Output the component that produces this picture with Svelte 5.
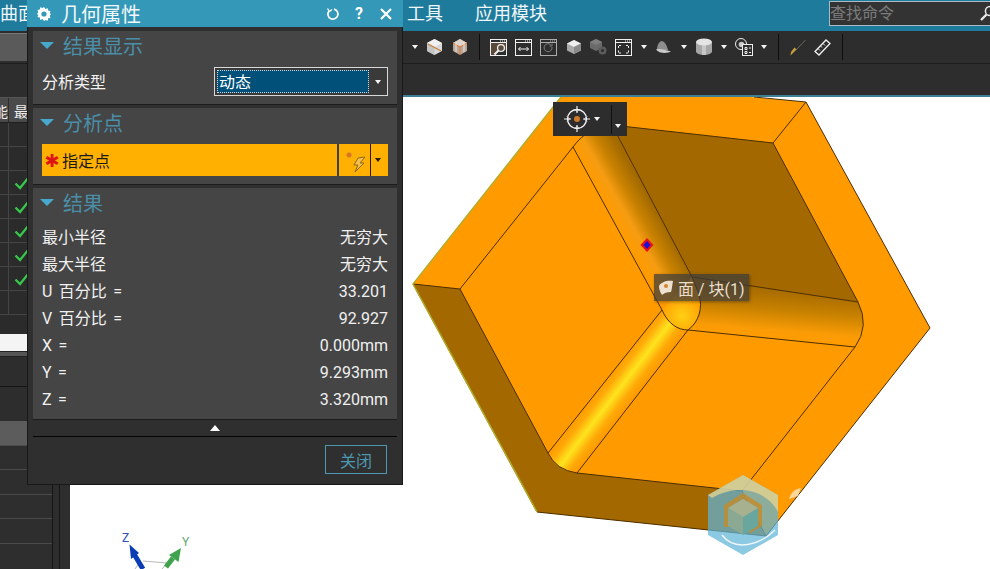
<script>
	const results = [
		['最小半径', '无穷大'],
		['最大半径', '无穷大'],
		['U 百分比 =', '33.201'],
		['V 百分比 =', '92.927'],
		['X =', '0.000mm'],
		['Y =', '9.293mm'],
		['Z =', '3.320mm']
	];
	const rows = [false, false, true, true, true, true, true, false];
	const lowerRows = [0, 1, 2, 3, 4];
</script>

{#snippet arrow()}
	<span class="tool-arrow"><i class="tri"></i></span>
{/snippet}

{#snippet sep()}
	<span class="tool-sep"></span>
{/snippet}

{#snippet winIcon(body)}
	<span class="tool">
		<svg width="17" height="17" viewBox="0 0 17 17" fill="none" stroke="#f0f0f0">
			<rect x="0.5" y="0.5" width="16" height="16" />
			<path d="M1 3.5h15" stroke-width="1" />
			<path d="M10 2h1M12 2h1M14 2h1" stroke-width="1" />
			{@render body()}
		</svg>
	</span>
{/snippet}

{#snippet sectionHead(title)}
	<div class="sec-head">
		<i class="sec-tri"></i>
		<span>{title}</span>
	</div>
{/snippet}

<div class="app">
	<header class="menubar">
		<span class="menu-clip">曲面</span>
		<span class="menu-tools">工具</span>
		<span class="menu-app">应用模块</span>
		<div class="search">
			<span>查找命令</span>
			<svg class="search-icon" width="14" height="20" viewBox="0 0 14 20" fill="none" stroke="#e8e8e8" stroke-width="1.5">
				<circle cx="10" cy="7" r="4.6" />
				<path d="M6.5 10.5L1 16" stroke-width="2.4" />
			</svg>
		</div>
	</header>

	<div class="toolbar">
		<div class="left-btn"></div>
		<div class="tools">
			{@render arrow()}
			<span class="tool">
				<svg width="17" height="18" viewBox="0 0 17 18">
					<path d="M8.5 1L16 5v8l-7.5 4L1 13V5z" fill="#d9d9d9" />
					<path d="M8.5 1L16 5l-7.5 4L1 5z" fill="#f0f0f0" />
					<path d="M1 5l7.5 4v8L1 13z" fill="#c4c4c4" />
					<path d="M2 6l13 7" stroke="#c9803a" stroke-width="1.4" />
				</svg>
			</span>
			<span class="tool">
				<svg width="16" height="18" viewBox="0 0 16 18">
					<path d="M8 1l7 4v8l-7 4-7-4V5z" fill="#b9a79a" />
					<path d="M8 1l7 4-7 4-7-4z" fill="#e0d4cc" />
					<path d="M8 9v8M1 5l7 4 7-4" stroke="#d9722e" stroke-width="1" fill="none" />
					<path d="M4 4v10M12 4v10" stroke="#f0e8e0" stroke-width="1" />
				</svg>
			</span>
			{@render sep()}
			{#snippet zoomBody()}
				<path d="M1 4h15v7H9l-3 5H1z" fill="#5a4a3a" stroke="none" />
				<circle cx="11" cy="9" r="3.4" stroke-width="1.3" />
				<path d="M8.5 11.5L4.5 15.5" stroke-width="2" />
			{/snippet}
			{@render winIcon(zoomBody)}
			{#snippet fitBody()}
				<path d="M3.5 10h10M5.5 8l-2 2 2 2M11.5 8l2 2-2 2" />
			{/snippet}
			{@render winIcon(fitBody)}
			{#snippet rotateBody()}
				<path d="M12 8a4 4 0 1 1-1.4-2.4M12 4.5v2.5h-2.5" stroke="#a8a8a8" />
			{/snippet}
			<span class="dim">{@render winIcon(rotateBody)}</span>
			<span class="tool">
				<svg width="16" height="16" viewBox="0 0 16 16">
					<path d="M8 1l7 3.5v7L8 15l-7-3.5v-7z" fill="#a9a9a9" />
					<path d="M8 1l7 3.5L8 8 1 4.5z" fill="#efefef" />
					<path d="M8 8l7-3.5v7L8 15z" fill="#8a8a8a" />
				</svg>
			</span>
			<span class="tool">
				<svg width="18" height="18" viewBox="0 0 18 18">
					<path d="M6 1l6 3v6l-6 3-6-3V4z" fill="#6a6a6a" />
					<path d="M6 1l6 3-6 3-6-3z" fill="#7e7e7e" />
					<circle cx="12.5" cy="12.5" r="4" fill="#5c5c5c" />
					<circle cx="12.5" cy="12.5" r="1.5" fill="#2d2d2d" />
				</svg>
			</span>
			{#snippet fullBody()}
				<path d="M3.5 9V6.5H6M13.5 9V6.5H11M3.5 11.5V14H6M13.5 11.5V14H11" stroke-dasharray="2 1" />
			{/snippet}
			{@render winIcon(fullBody)}
			{@render arrow()}
			<span class="tool">
				<svg width="16" height="14" viewBox="0 0 16 14">
					<path d="M5 1c4 0 6 5 7 9H1c0-4 1-7 4-9z" fill="#8e8e8e" />
					<path d="M0 9.500c3-1 9 0 15 2-3 2-12 2.500-15-2z" fill="#c8c8c8" />
				</svg>
			</span>
			{@render arrow()}
			<span class="tool">
				<svg width="16" height="18" viewBox="0 0 16 18">
					<path d="M0 4v10c2 4 14 4 16 0V4z" fill="#a6a6a6" />
					<path d="M6 4v13h4V4z" fill="#c6c6c6" />
					<ellipse cx="8" cy="4" rx="8" ry="3.500" fill="#e4e4e4" />
				</svg>
			</span>
			{@render arrow()}
			<span class="tool">
				<svg width="18" height="18" viewBox="0 0 18 18" fill="none" stroke="#eee">
					<circle cx="6" cy="6" r="5.500" />
					<circle cx="6.500" cy="6.500" r="2.800" fill="#c8c8c8" stroke="none" />
					<rect x="7.500" y="6.500" width="10" height="11" fill="#2d2d2d" />
					<path d="M10 9.500h2v2h-2zM14 10h2M10 13.500h2v2h-2zM14 14.500h2" stroke-width="1" />
				</svg>
			</span>
			{@render arrow()}
			{@render sep()}
			<span class="tool">
				<svg width="16" height="17" viewBox="0 0 16 17">
					<path d="M15.500 1L6 11" stroke="#6a6a5a" stroke-width="1" />
					<path d="M6.500 10.500L2 15l-1.500 1.500L1 13l3.500-4.500z" fill="#c8a038" />
				</svg>
			</span>
			<span class="tool">
				<svg width="17" height="17" viewBox="0 0 17 17" fill="none" stroke="#f0f0f0" stroke-width="1.300">
					<path d="M1 12.500L12 1l4 3.500L5 16z" />
					<path d="M4 9.500l2 2M6.500 7l1.500 1.500M9 4.500l2 2" stroke-width="1" />
				</svg>
			</span>
			{@render sep()}
		</div>
	</div>

	<div class="subbar"></div>

	<div class="body">
		<aside class="left">
			<div class="tree">
				<div class="table-head"><span class="cell-a">能</span><span class="cell-b">最</span></div>
				{#each rows as checked}
					<div class="row">
						<span class="cell-a"></span>
						<span class="cell-b">
							{#if checked}
								<svg width="16" height="14" viewBox="0 0 16 14" fill="none" stroke="#35c94a" stroke-width="2.200">
									<path d="M1.500 7.500L6 12 14.500 1.500" />
								</svg>
							{/if}
						</span>
					</div>
				{/each}
				<div class="row short"></div>
				<div class="white-row"></div>
				<div class="band"></div>
				<div class="lower-dark"></div>
				<div class="lower-dark second"></div>
				<div class="selected"></div>
				{#each lowerRows as r}
					<div class="lower-row" data-row={r}></div>
				{/each}
			</div>
			<div class="gutter"></div>
			<div class="gutter wide"></div>
		</aside>

		<main class="viewport">
			<svg class="model" width="920" height="472" viewBox="70 97 920 472">
				<defs>
					<linearGradient id="f1" gradientUnits="userSpaceOnUse" x1="614" y1="219" x2="649" y2="199">
						<stop offset="0" stop-color="#ff9b00" />
						<stop offset="0.32" stop-color="#f59c12" />
						<stop offset="0.62" stop-color="#c98200" />
						<stop offset="1" stop-color="#a36a00" />
					</linearGradient>
					<linearGradient id="f2" gradientUnits="userSpaceOnUse" x1="772" y1="290" x2="768" y2="340">
						<stop offset="0" stop-color="#a86c00" />
						<stop offset="0.4" stop-color="#c98200" />
						<stop offset="0.8" stop-color="#fb9c06" />
						<stop offset="1" stop-color="#ff9b00" />
					</linearGradient>
					<linearGradient id="f3" gradientUnits="userSpaceOnUse" x1="604" y1="382" x2="630" y2="402">
						<stop offset="0" stop-color="#ff9b00" />
						<stop offset="0.2" stop-color="#ffaa08" />
						<stop offset="0.5" stop-color="#ffe41e" />
						<stop offset="0.8" stop-color="#ffaa08" />
						<stop offset="1" stop-color="#ff9b00" />
					</linearGradient>
					<radialGradient id="ball" gradientUnits="userSpaceOnUse" cx="682" cy="316" r="22">
						<stop offset="0" stop-color="#ffcf14" />
						<stop offset="1" stop-color="#ff9f02" />
					</radialGradient>
				</defs>

				<!-- body -->
				<polygon points="413,284 561,97 565,80 806,102 930,328 766,536 537,512" fill="#ff9b00" />

				<!-- walls and pocket faces -->
				<path d="M413,284 L460,289 L548,453 Q556,470 577,473 L742,491 L766,536 L537,512 Z" fill="#a36800" />
				<polygon points="612,125 773,143 858,302 692,277" fill="#a36800" />
				<path d="M573,147 Q580,137 592,130 L612,125 L692,277 L662,310 Z" fill="url(#f1)" />
				<path d="M692,277 L858,302 Q870,326 855,347 L688,330 Z" fill="url(#f2)" />
				<path d="M662,310 L548,453 Q556,470 577,473 L688,330 Z" fill="url(#f3)" />
				<path d="M662,310 C668,324 678,330 688,330 C699,322 703,308 699,294 L692,277 Z" fill="url(#ball)" />

				<!-- edges -->
				<g fill="none" stroke="#4a2e00" stroke-width="1">
					<path d="M413,284 L537,512 L766,536 L930,328 L806,102 L754,97" />
					<path d="M413,284 L460,289 L573,147 Q580,137 592,130" />
					<path d="M460,289 L548,453 Q556,470 577,473 L742,491 L766,536" />
					<path d="M742,491 L855,347 Q870,326 858,302 L773,143 L806,102" />
					<path d="M612,125 L773,143" />
					<path d="M573,147 L662,310 L548,453" />
					<path d="M612,125 L692,277 L858,302" />
					<path d="M577,473 L688,330 L855,347" />
					<path d="M662,310 C668,324 678,330 688,330 C699,322 703,308 699,294 L692,277" />
				</g>
				<path d="M537,512 L413,284 L561,97" fill="none" stroke="#b3ad2c" stroke-width="1.500" />

				<!-- selected point -->
				<polygon points="647,238 653.500,245 647,252 640.500,245" fill="#e8101c" />
				<polygon points="647,241 650.500,245 647,249 643.500,245" fill="#1a10d8" />

				<!-- watermark -->
				<g>
					<polygon points="743,475 778,495 778,535 743,555 708,535 708,495" fill="#5fb4d8" fill-opacity="0.72" />
					<path d="M708,495 L743,475 L778,495 L778,512 C768,492 740,482 712,498 Z" fill="#f0d890" fill-opacity="0.7" />
					<path d="M724,505 L743,493 L762,505 L762,526 L750,533 L738,527 L724,527 Z" fill="#c98a20" fill-opacity="0.75" />
					<polygon points="728,508 743,499 758,508 758,526 743,535 728,526" fill="#5fa9a8" fill-opacity="0.9" />
					<polygon points="728,508 743,499 758,508 743,517" fill="#a8b18f" />
					<polygon points="728,508 743,517 743,535 728,526" fill="#8aa892" />
					<path d="M722,535 C735,552 760,545 775,530" fill="none" stroke="#fff" stroke-opacity="0.85" stroke-width="1.500" />
					<path d="M789,499 C791,492 795,489 801,488 L798,496 Z" fill="#fff" fill-opacity="0.6" />
				</g>

				<!-- triad -->
				<g>
					<path d="M143,561 L167,563 M167,563 L162,569 M139,563 L135,569" stroke="#b8b8b8" stroke-width="1" fill="none" />
					<path d="M134,554 L143,569" stroke="#0a3cb4" stroke-width="5" />
					<polygon points="129.500,544.500 139,553 131,559" fill="#0a3cb4" />
					<path d="M173,558 L166,567" stroke="#3fa34d" stroke-width="5" />
					<polygon points="181,548 178.500,562 169,555" fill="#3fa34d" />
					<text x="122" y="542" class="axis z">Z</text>
					<text x="182" y="546" class="axis y">Y</text>
				</g>
			</svg>

			<div class="selbar">
				<svg width="26" height="26" viewBox="0 0 26 26" fill="none" stroke="#f2f2f2">
					<circle cx="13" cy="13" r="9.500" stroke-width="1.300" />
					<circle cx="13" cy="13" r="3" fill="#d07a2a" stroke="none" />
					<path d="M13 0v7M13 19v7M0 13h7M19 13h7" stroke-width="1.200" />
					<path d="M10.500 3L13 5.500 15.500 3M10.500 23L13 20.500 15.500 23M3 10.500L5.500 13 3 15.500M23 10.500L20.500 13 23 15.500" stroke-width="1" />
				</svg>
				<i class="tri"></i>
				<span class="selbar-sep"></span>
				<i class="tri low"></i>
			</div>

			<div class="tip">
				<svg width="16" height="16" viewBox="0 0 16 16">
					<path d="M1 6c2-4 8-6 14-5-1 5-1 8-2 11-4 0-7 1-9 3-2-3-3-6-3-9z" fill="#eee2cf" />
					<circle cx="8" cy="6" r="2" fill="#d9822e" />
				</svg>
				<span>面 / 块(1)</span>
			</div>
		</main>
	</div>

	<section class="dialog">
		<div class="title">
			<svg class="gear" width="14" height="14" viewBox="0 0 14 14">
				<path d="M7 0l1.500 2 2.300-.8.300 2.400 2.400.4-.8 2.300L14 7l-1.300 1.700.8 2.200-2.400.4-.3 2.400-2.300-.8L7 14l-1.500-1.900-2.300.8-.3-2.400-2.400-.4.800-2.200L0 7l1.300-1.700-.8-2.300 2.400-.4.300-2.400 2.300.8z" fill="#fff" />
				<circle cx="7" cy="7" r="2.600" fill="#3498b9" />
			</svg>
			<span class="title-text">几何属性</span>
			<svg class="refresh" width="14" height="14" viewBox="0 0 14 14" fill="none" stroke="#fff" stroke-width="1.700">
				<path d="M8 2.200A5 5 0 1 1 3 4" />
				<path d="M1.500 1.500L3.500 4.500 6 2.500" stroke-width="1.300" />
			</svg>
			<span class="help">?</span>
			<svg class="close" width="12" height="12" viewBox="0 0 12 12" stroke="#fff" stroke-width="2.200">
				<path d="M1 1l10 10M11 1L1 11" />
			</svg>
		</div>

		<div class="section first">
			{@render sectionHead('结果显示')}
			<div class="type-row">
				<span class="type-label">分析类型</span>
				<div class="combo">
					<div class="combo-value">动态</div>
					<i class="tri"></i>
				</div>
			</div>
		</div>

		<div class="section second">
			{@render sectionHead('分析点')}
			<div class="point">
				<span class="star">✱</span>
				<span class="point-label">指定点</span>
				<div class="point-tools">
					<svg width="30" height="30" viewBox="0 0 30 30">
						<circle cx="10" cy="10" r="2.500" fill="#e0701a" stroke="#c9a040" stroke-width="0.500" />
						<path d="M26 12l-7 1-4 7h4l-3 7 9-9h-4z" fill="#f7c04a" stroke="#8a6a20" stroke-width="1" />
					</svg>
					<span class="point-line"></span>
					<i class="tri dark"></i>
				</div>
			</div>
		</div>

		<div class="section third">
			{@render sectionHead('结果')}
			{#each results as [label, value]}
				<div class="result">
					<span class="result-label">{label}</span>
					<span>{value}</span>
				</div>
			{/each}
		</div>

		<div class="collapse"><i class="up"></i></div>
		<div class="footer">
			<button class="btn-close">关闭</button>
		</div>
	</section>
</div>

<style>
	:global(body) {
		margin: 0;
		overflow: hidden;
	}

	.app {
		position: relative;
		width: 990px;
		height: 569px;
		overflow: hidden;
		background: #2d2d2d;
		font-family: Roboto, "Noto Sans CJK SC", sans-serif;
		color: #eee;
	}

	.tri {
		display: block;
		width: 0;
		height: 0;
		border-left: 3.500px solid transparent;
		border-right: 3.500px solid transparent;
		border-top: 4px solid #f4f4f4;
	}

	.menubar {
		position: relative;
		height: 31px;
		background: #1f7b9c;
		font-size: 18px;
		line-height: 28px;
		color: #f0f6f8;
		display: flex;
	}

	.menu-clip {
		width: 407px;
		flex: none;
	}

	.menu-tools {
		width: 68px;
		flex: none;
	}

	.search {
		margin-left: auto;
		margin-top: 1px;
		width: 160px;
		height: 23px;
		box-sizing: content-box;
		background: #333;
		border: 1px solid #a9bcc4;
		border-right: none;
		font-size: 16px;
		line-height: 23px;
		color: #7c7c7c;
		display: flex;
		justify-content: space-between;
		align-items: center;
		overflow: hidden;
	}

	.search-icon {
		flex: none;
		margin-right: -4px;
	}

	.toolbar {
		height: 32px;
		border-bottom: 1px solid #1d1d1d;
		background: #2d2d2d;
		display: flex;
	}

	.left-btn {
		width: 27px;
		height: 27px;
		margin-top: 2px;
		background: #5a5a5a;
		border-top: 1px solid #777;
		box-sizing: content-box;
	}

	.tools {
		margin-left: 380px;
		display: flex;
		align-items: center;
		height: 32px;
	}

	.tool {
		width: 25px;
		display: flex;
		justify-content: center;
		align-items: center;
	}

	.dim {
		opacity: 0.65;
		display: flex;
	}

	.tool-arrow {
		width: 15px;
		display: flex;
		justify-content: center;
	}

	.tool-sep {
		width: 14px;
		height: 26px;
		position: relative;
		display: flex;
		justify-content: center;
	}

	.tool-sep::after {
		content: "";
		width: 1px;
		background: #0d0d0d;
	}

	.subbar {
		height: 31px;
		background: #2d2d2d;
	}

	.body {
		display: flex;
		height: 474px;
	}

	.left {
		width: 70px;
		flex: none;
		display: flex;
		padding-top: 2px;
		box-sizing: border-box;
		background: #2d2d2d;
	}

	.tree {
		width: 52px;
		display: flex;
		flex-direction: column;
	}

	.gutter {
		width: 6px;
		border-left: 1px solid #161616;
	}

	.gutter.wide {
		width: 10px;
	}

	.table-head {
		height: 26px;
		background: #4a4a4a;
		border-top: 1px solid #555;
		border-bottom: 1px solid #1f1f1f;
		box-sizing: border-box;
		display: flex;
		font-size: 14px;
		line-height: 28px;
		color: #eee;
	}

	.cell-a {
		width: 8px;
		flex: none;
		overflow: hidden;
		direction: rtl;
		border-right: 1px solid #2d2d2d;
	}

	.cell-b {
		padding-left: 5px;
		display: flex;
		align-items: center;
	}

	.table-head .cell-b {
		display: block;
	}

	.row {
		height: 24px;
		border-bottom: 1px solid #444;
		box-sizing: border-box;
		display: flex;
		background: #2b2b2b;
	}

	.row .cell-a {
		border-right-color: #444;
	}

	.row.short {
		height: 19px;
		border-bottom: none;
	}

	.white-row {
		height: 17px;
		background: #f4f4f4;
	}

	.band {
		height: 6px;
		background: #565656;
		border-top: 1px solid #222;
		border-bottom: 1px solid #222;
		box-sizing: border-box;
	}

	.lower-dark {
		height: 29px;
		background: #2d2d2d;
		border-bottom: 1px solid #141414;
	}

	.lower-dark.second {
		height: 34px;
		border-bottom: none;
	}

	.selected {
		height: 24px;
		background: #5c5c5c;
	}

	.lower-row {
		height: 23.400px;
		border-top: 1px solid #4a4a4a;
		background: #2e2e2e;
	}

	.viewport {
		position: relative;
		flex: 1;
		background: #fff;
		border-top: 2px solid #3d7f95;
		overflow: hidden;
	}

	.model {
		position: absolute;
		left: 0;
		top: 0;
		display: block;
	}

	.axis {
		font-size: 12px;
		font-family: Roboto, sans-serif;
	}

	.axis.z {
		fill: #2a52b8;
	}

	.axis.y {
		fill: #6aa872;
	}

	.selbar {
		position: absolute;
		left: 483px;
		top: 5px;
		width: 74px;
		height: 34px;
		background: #2d2d2d;
		box-sizing: border-box;
		padding-left: 11px;
		display: flex;
		align-items: center;
	}

	.selbar .tri {
		margin-left: 4px;
	}

	.selbar-sep {
		width: 1px;
		height: 29px;
		background: #111;
		margin-left: 11px;
	}

	.selbar .tri.low {
		margin-left: 3px;
		margin-top: 14px;
	}

	.tip {
		position: absolute;
		left: 584px;
		top: 177px;
		width: 95px;
		height: 27px;
		box-sizing: border-box;
		background: rgba(60, 60, 60, 0.72);
		box-shadow: 1px 1px 3px rgba(0, 0, 0, 0.35);
		display: flex;
		align-items: center;
		gap: 4px;
		padding-left: 4px;
		font-size: 16px;
		color: #e9dfce;
		white-space: nowrap;
	}

	.dialog {
		position: absolute;
		left: 27px;
		top: 0;
		width: 376px;
		height: 485px;
		box-sizing: border-box;
		background: #2f2f2f;
		border: 1px solid #181818;
		border-top: none;
		display: flex;
		flex-direction: column;
		align-items: center;
	}

	.title {
		align-self: stretch;
		height: 27px;
		flex: none;
		margin: 0 -1px;
		background: #3498b9;
		display: flex;
		align-items: center;
		color: #fff;
		position: relative;
	}

	.gear {
		margin-left: 10px;
	}

	.title-text {
		margin-left: 10px;
		font-size: 20px;
		color: #f2f8fa;
	}

	.refresh {
		margin-left: auto;
	}

	.help {
		margin-left: 13px;
		font-size: 16px;
		font-weight: 700;
		width: 12px;
		text-align: center;
	}

	.close {
		margin-left: 15px;
		margin-right: 11px;
	}

	.section {
		width: 364px;
		box-sizing: border-box;
		background: #454545;
		border-bottom: 1px solid #1c1c1c;
		padding: 0 9px;
		flex: none;
	}

	.section.first {
		margin-top: 4px;
		height: 74px;
	}

	.section.second {
		margin-top: 3px;
		height: 77px;
	}

	.section.third {
		margin-top: 3px;
		height: 232px;
	}

	.sec-head {
		height: 29px;
		display: flex;
		align-items: center;
		font-size: 20px;
		color: #4a8ea8;
		margin-bottom: 7px;
	}

	.sec-tri {
		width: 0;
		height: 0;
		margin: 0 9px 0 -2px;
		border-left: 7px solid transparent;
		border-right: 7px solid transparent;
		border-top: 7px solid #46a8cc;
	}

	.type-row {
		display: flex;
		justify-content: space-between;
		align-items: center;
		font-size: 16px;
		color: #f2f2f2;
	}

	.type-label {
		padding-bottom: 2px;
	}

	.combo {
		width: 174px;
		height: 29px;
		box-sizing: border-box;
		border: 1px solid #d8d8d8;
		padding: 2px 3px 2px 2px;
		display: flex;
		align-items: center;
		justify-content: space-between;
		background: #3a3a3a;
	}

	.combo-value {
		width: 152px;
		height: 23px;
		box-sizing: border-box;
		background: #00507a;
		outline: 1px dotted #d0d8dc;
		outline-offset: -1px;
		line-height: 25px;
		padding-left: 2px;
		color: #fff;
	}

	.combo .tri {
		margin-right: 3px;
	}

	.point {
		height: 32px;
		background: #ffb000;
		display: flex;
		align-items: center;
		color: #1a1a1a;
		font-size: 16px;
	}

	.star {
		width: 20px;
		text-align: center;
		color: #e01414;
		font-size: 18px;
		font-family: "DejaVu Sans", sans-serif;
	}

	.point-tools {
		margin-left: auto;
		width: 49px;
		height: 32px;
		border-left: 2px solid #3f3f3f;
		display: flex;
		align-items: center;
	}

	.point-line {
		width: 1px;
		height: 32px;
		background: #2a1a00;
		margin-left: 1px;
	}

	.tri.dark {
		margin-left: 4px;
		border-top-color: #2a1a00;
	}

	.result {
		height: 27px;
		line-height: 27px;
		display: flex;
		justify-content: space-between;
		font-size: 16px;
		color: #f0f0f0;
	}

	.result-label {
		word-spacing: 2.500px;
	}

	.collapse {
		width: 364px;
		height: 16px;
		flex: none;
		border-bottom: 1px solid #050505;
		display: flex;
		justify-content: center;
		align-items: center;
	}

	.up {
		width: 0;
		height: 0;
		border-left: 5px solid transparent;
		border-right: 5px solid transparent;
		border-bottom: 6px solid #fff;
	}

	.footer {
		width: 364px;
		display: flex;
		justify-content: flex-end;
		padding: 8px 10px 0 0;
		box-sizing: border-box;
	}

	.btn-close {
		width: 62px;
		height: 29px;
		background: transparent;
		border: 1px solid #4e97b0;
		color: #4e97b0;
		font-size: 16px;
		font-family: inherit;
		padding: 0;
	}
</style>
